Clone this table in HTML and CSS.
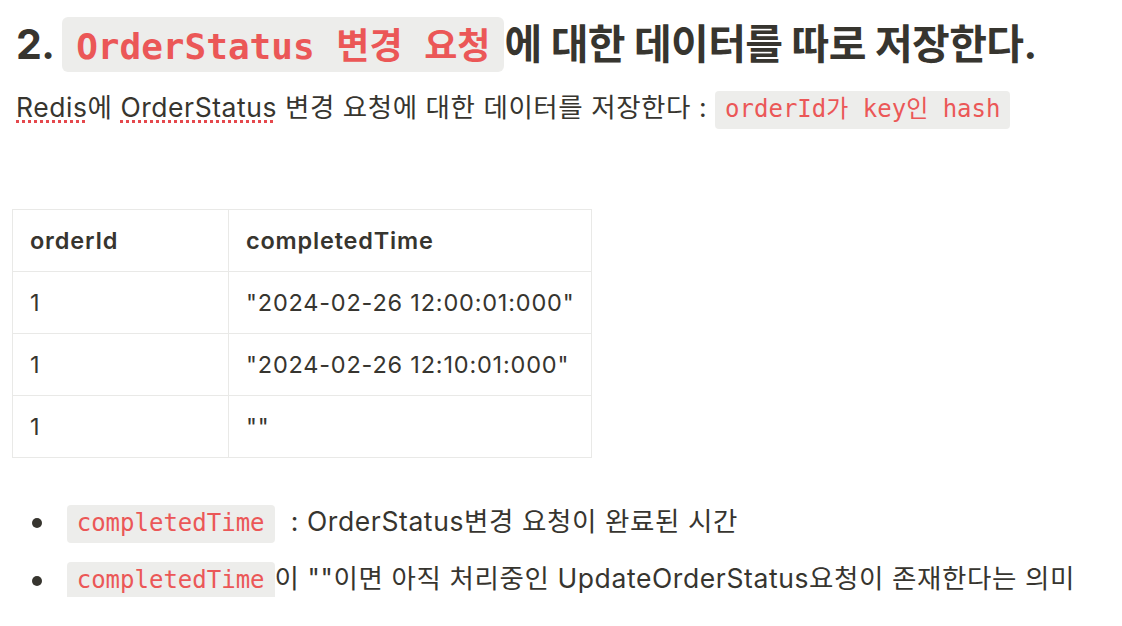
FILE: index.html
```html
<!DOCTYPE html>
<html lang="ko">
<head>
<meta charset="utf-8">
<title>OrderStatus</title>
<link rel="stylesheet" href="styles.css">
</head>
<body>
<main class="page">
  <h1 class="heading">2. <code class="code code-lg">OrderStatus 변경 요청</code>에 대한 데이터를 따로 저장한다.</h1>
  <p class="para"><span class="spell">Redis</span>에 <span class="spell">OrderStatus</span> 변경 요청에 대한 데이터를 저장한다 : <code class="code">orderId가 key인 hash</code></p>
  <table class="data">
    <colgroup><col class="c1"><col class="c2"></colgroup>
    <thead>
      <tr><th>orderId</th><th>completedTime</th></tr>
    </thead>
    <tbody>
      <tr><td>1</td><td>"2024-02-26 12:00:01:000"</td></tr>
      <tr><td>1</td><td>"2024-02-26 12:10:01:000"</td></tr>
      <tr><td>1</td><td>""</td></tr>
    </tbody>
  </table>
  <ul class="list">
    <li class="item"><code class="code">completedTime</code>&nbsp; : OrderStatus변경 요청이 완료된 시간</li>
    <li class="item"><code class="code">completedTime</code>이 ""이면 아직 처리중인 UpdateOrderStatus요청이 존재한다는 의미</li>
  </ul>
</main>
</body>
</html>
```

FILE: styles.css
```css
html, body {
  margin: 0;
  padding: 0;
  background: #ffffff;
}

body {
  font-family: Inter, "Noto Sans CJK KR", sans-serif;
  color: #37352f;
}

.page {
  padding: 0 16px;
}

.heading {
  margin: 0;
  padding-top: 18px;
  font-size: 41px;
  line-height: 52px;
  font-weight: 700;
  letter-spacing: -0.6px;
  white-space: nowrap;
}

.code {
  font-family: "DejaVu Sans Mono", "Noto Sans CJK KR", monospace;
  color: #eb5757;
  background: rgba(135, 131, 120, 0.15);
  border-radius: 4px;
  font-size: 24px;
  line-height: 1;
  letter-spacing: 0;
  padding: 4px 10px 6px;
  font-weight: 400;
}

.code-lg {
  font-size: 36px;
  font-weight: 700;
  padding: 9px 14px 5px;
  border-radius: 6px;
}

.para {
  margin: 18px 0 0;
  font-size: 26.5px;
  line-height: 38px;
  letter-spacing: 0.55px;
  white-space: nowrap;
}

.spell {
  text-decoration: underline dotted #e5484d;
  text-decoration-thickness: 2.5px;
  text-underline-offset: 3px;
}

.data {
  margin: 83px 0 0 -4px;
  border-collapse: collapse;
  table-layout: fixed;
  width: 579px;
  font-size: 23.5px;
  line-height: 33px;
  letter-spacing: 0.8px;
}

.data .c1 { width: 216px; }
.data .c2 { width: 363px; }

.data th,
.data td {
  border: 1px solid #e9e9e7;
  padding: 14px 17px;
  text-align: left;
  white-space: nowrap;
}

.data th {
  font-weight: 600;
}

.list {
  list-style: none;
  margin: 44px 0 0;
  padding: 0;
  display: flex;
  flex-direction: column;
  gap: 19.4px;
  font-size: 26.5px;
  line-height: 38px;
  letter-spacing: 0.6px;
}

.item {
  padding-left: 50.7px;
  white-space: nowrap;
}

.item::before {
  content: "";
  display: inline-block;
  width: 10px;
  height: 10px;
  border-radius: 50%;
  background: #37352f;
  margin-left: -34.7px;
  margin-right: 24.7px;
  vertical-align: 2.7px;
}
```
